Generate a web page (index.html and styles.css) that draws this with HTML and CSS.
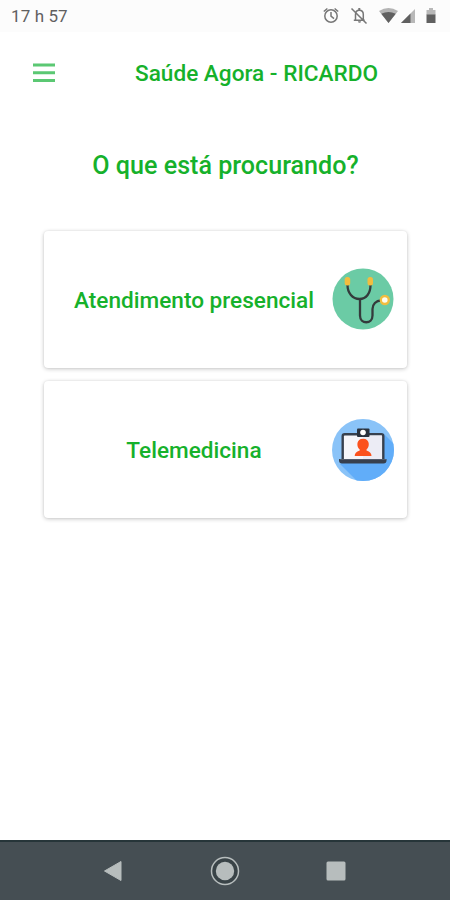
FILE: index.html
```html
<!DOCTYPE html>
<html lang="pt-BR">
<head>
<meta charset="utf-8">
<title>Saúde Agora</title>
<link rel="stylesheet" href="styles.css">
</head>
<body>
<div class="screen">
  <div class="status">
    <span class="clock">17 h 57</span>
    <svg class="status-icons" width="120" height="24" viewBox="320 4 120 24">
      <g fill="none" stroke="#777" stroke-width="1.500">
        <circle cx="331" cy="16" r="6.200"/>
        <path d="M331 12v4.200l3 2.500M323.800 11.500l3.600-3M338.200 11.500l-3.600-3"/>
        <path d="M355.500 19.800v-5.300c0-2.700 1.600-4.300 3.800-4.300s4 1.600 4 4.300v5.300M353.800 20.300h11M351.500 8.500l15 15"/>
      </g>
      <path d="M358 21.300h3a1.500 1.500 0 0 1-3 0zM358.300 8h2v2.500h-2z" fill="#777"/>
      <path d="M379 11q9.500-6 19 0L388.500 23z" fill="#b4b4b4"/>
      <path d="M381.300 13.800q7.200-3.400 14.400 0L388.500 23z" fill="#606060"/>
      <path d="M415 9v14h-14z" fill="#b8b8b8"/>
      <path d="M410.500 13.500V23H401z" fill="#606060"/>
      <path d="M426.500 10h2.500V8h4v2h2.500v5h-9z" fill="#b8b8b8"/>
      <path d="M426.500 14.500h9V23h-9z" fill="#606060"/>
    </svg>
  </div>
  <header class="appbar">
    <svg class="menu" width="22" height="20" viewBox="0 0 22 20"><path d="M0 2h22M0 9.700h22M0 17.500h22" stroke="#5bc873" stroke-width="3"/></svg>
    <h1 class="title">Saúde Agora - RICARDO</h1>
  </header>
  <main class="content">
    <h2 class="question">O que está procurando?</h2>
    <div class="card">
      <span class="label">Atendimento presencial</span>
      <svg class="icon" width="62" height="62" viewBox="0 1 62 62">
        <circle cx="31" cy="31" r="30.500" fill="#6bcba5"/>
        <g fill="none" stroke="#343b3c" stroke-width="2.300">
          <path d="M15.500 17c0 8 5 14 12 14S38.500 25 38.500 17"/>
          <path d="M28 31v16.500c0 9 12.500 9 12.500 0v-6.500c0-4.500 3.500-8.500 8.500-8.500"/>
        </g>
        <g fill="#f1bd3f"><rect x="12.700" y="9" width="5.500" height="8.500" rx="2.500"/><rect x="35.500" y="9" width="5.500" height="8.500" rx="2.500"/><circle cx="52.800" cy="32" r="5.200"/></g>
        <circle cx="52.800" cy="32" r="2.800" fill="#fffdf0"/>
      </svg>
    </div>
    <div class="card">
      <span class="label">Telemedicina</span>
      <svg class="icon" width="62" height="62" viewBox="0 0 62 62">
        <defs><clipPath id="disc"><circle cx="31" cy="31" r="31"/></clipPath></defs>
        <g clip-path="url(#disc)">
          <path d="M0 0h62v62H0z" fill="#8ac3f8"/>
          <path d="M52 15l14 14v36H28L8 45z" fill="#61adf9"/>
        </g>
        <rect x="10.700" y="15.200" width="40.600" height="27" rx="2" fill="#f6f6fa" stroke="#37404e" stroke-width="2.400"/>
        <path d="M31 16.500h19v24H31z" fill="#ececf5"/>
        <rect x="25" y="9.500" width="12.500" height="8.500" rx="1" fill="#29313d"/>
        <circle cx="31" cy="13.500" r="2.800" fill="#fff"/>
        <path d="M7 40h47.500v1.500q0 3-3 3H10q-3 0-3-3z" fill="#37404e"/>
        <path d="M8 40.500h46" stroke="#535c6c"/>
        <path d="M31 19.800c7 0 7 8 3.500 10.700v1c3.500 1 5 3 5 5.500H22.700c0-2.500 1.500-4.500 5-5.500v-1c-3.500-2.700-3.500-10.700 3.300-10.700z" fill="#fb521e"/>
      </svg>
    </div>
  </main>
  <nav class="navbar">
    <svg width="30" height="30" viewBox="0 0 30 30"><path d="M5.500 15L22 5.500v19z" fill="#b7bdbd" stroke="#b7bdbd" stroke-linejoin="round"/></svg>
    <svg width="30" height="30" viewBox="0 0 30 30"><circle cx="15" cy="15" r="13.500" fill="#394347" stroke="#b7bdbd" stroke-width="1.500"/><circle cx="15" cy="15" r="9.200" fill="#b7bdbd"/></svg>
    <svg width="30" height="30" viewBox="0 0 30 30"><rect x="5.500" y="5.500" width="19" height="19" rx="1.500" fill="#b7bdbd"/></svg>
  </nav>
</div>
</body>
</html>
```
FILE: styles.css
```css
* { box-sizing: border-box; }
body { margin: 0; font-family: Roboto, "Liberation Sans", sans-serif; background: #fff; }
h1, h2 { margin: 0; font-weight: 500; }
.screen { display: flex; flex-direction: column; width: 450px; height: 900px; color: #16b12b; }
.status { display: flex; justify-content: space-between; align-items: center; height: 32px; padding: 0 10px 0 11px; background: #fcfcfc; color: #606060; }
.clock { font-size: 17px; letter-spacing: 0.1px; }
.status-icons, .menu, .icon, .navbar svg { display: block; flex: none; overflow: visible; }
.appbar { display: flex; align-items: center; height: 82px; padding-left: 33px; }
.title { margin-left: 80px; padding-top: 2px; font-size: 22.6px; line-height: 28px; white-space: nowrap; }
.content { display: flex; flex-direction: column; flex: 1; gap: 13px; padding: 36px 43px 0 44px; }
.question { height: 68px; font-size: 25.1px; line-height: 32px; text-align: center; white-space: nowrap; }
.card { display: flex; align-items: center; height: 137px; padding: 0 13px 0 12px; border-radius: 4px; background: #fff; box-shadow: 0 1px 4px rgba(0, 0, 0, 0.22), 0 0 2px rgba(0, 0, 0, 0.08); }
.label { flex: 1; padding-top: 2px; font-size: 22.6px; font-weight: 500; line-height: 28px; text-align: center; white-space: nowrap; }
.navbar { display: flex; justify-content: center; gap: 81px; align-items: center; height: 60px; border-top: 2px solid #263539; background: #454e53; }
```
